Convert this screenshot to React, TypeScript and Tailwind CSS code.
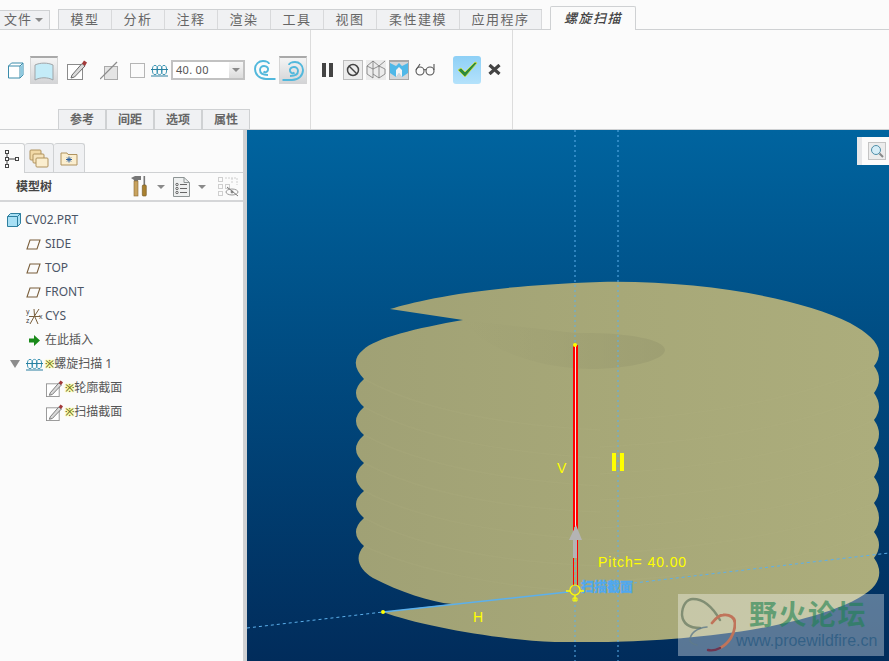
const mainTabs = [
  { label: '模型', w: 'w-[53px]' },
  { label: '分析', w: 'w-[53px]' },
  { label: '注释', w: 'w-[53px]' },
  { label: '渲染', w: 'w-[53px]' },
  { label: '工具', w: 'w-[53px]' },
  { label: '视图', w: 'w-[53px]' },
  { label: '柔性建模', w: 'w-[83px]' },
  { label: '应用程序', w: 'w-[82px]' },
];

const subTabs = ['参考', '间距', '选项', '属性'];

const datums = ['SIDE', 'TOP', 'FRONT'];

// thread shading streaks on the model, page coordinates
const streaks = [
  'M620 420 C700 415 800 400 874 366',
  'M600 447 C700 442 800 428 874 393',
  'M600 474 C700 468 800 455 874 420',
  'M600 500 C700 495 800 482 874 448',
  'M600 528 C700 522 800 510 874 477',
  'M600 554 C700 548 800 535 874 503',
  'M600 582 C700 576 800 562 874 532',
  'M364 379 C420 410 500 425 600 430',
  'M364 407 C420 438 500 452 600 458',
  'M364 435 C420 465 500 480 600 486',
  'M364 463 C420 492 500 508 600 512',
  'M364 491 C420 520 500 534 600 540',
  'M364 518 C420 548 500 562 600 566',
  'M364 546 C420 572 500 585 560 590',
];

function CoilIcon() {
  return (
    <svg width="17" height="14" viewBox="0 0 17 14" fill="none">
      <ellipse cx="4" cy="7" rx="2.6" ry="4.6" stroke="#3f97b5" />
      <ellipse cx="8.5" cy="7" rx="2.6" ry="4.6" stroke="#3f97b5" />
      <ellipse cx="13" cy="7" rx="2.6" ry="4.6" stroke="#3f97b5" />
      <path d="M0 6.5H17M0 13H17" stroke="#2a7f9f" />
    </svg>
  );
}

function SketchIcon({ size = 20 }: { size?: number }) {
  return (
    <svg width={size} height={size} viewBox="0 0 20 20" fill="none">
      <rect x="0.5" y="4.5" width="15" height="15" fill="#fff" stroke="#8b8b8b" />
      <path d="M5 15 L15 3.5 L18 6 L7.5 17 L4 18 Z" fill="#d9d9d9" stroke="#5b5b5b" strokeWidth="0.9" />
      <path d="M15 3.5 L17 0.5 L20 2.5 L18 6 Z" fill="#a33a3a" />
    </svg>
  );
}

function PlaneIcon() {
  return (
    <svg width="15" height="11" viewBox="0 0 15 11" fill="none">
      <path d="M4 1 H14 L11 10 H1 Z" fill="#fbfbfb" stroke="#7a5f3c" strokeWidth="1.1" />
    </svg>
  );
}

function Arrow() {
  return <div className="h-0 w-0 border-x-[4px] border-t-[4px] border-x-transparent border-t-[#8a8a8a]" />;
}

function Star() {
  return <span className="-translate-y-[3px] text-[11px] leading-none text-[#555] [text-shadow:0_0_1px_#ffff00,0_0_2px_#ffff00]">※</span>;
}

function FolderIcon({ many }: { many?: boolean }) {
  if (many) {
    return (
      <svg width="20" height="20" viewBox="0 0 20 20">
        <rect x="1" y="2" width="11" height="10" rx="1" fill="#f2d9a6" stroke="#b0935f" />
        <rect x="4" y="6" width="11" height="9" rx="1" fill="#f6e3bb" stroke="#b0935f" />
        <rect x="7" y="10" width="12" height="9" rx="1" fill="#fbeecf" stroke="#b0935f" />
      </svg>
    );
  }
  return (
    <svg width="18" height="16" viewBox="0 0 18 16">
      <path d="M1 3 H7 L8 4.5 H17 V15 H1 Z" fill="#fbeecf" stroke="#b0935f" />
      <path d="M9 6.5 V12.5 M6 9.5 H12 M7 7.5 L11 11.5 M11 7.5 L7 11.5" stroke="#2b5f9e" />
    </svg>
  );
}

function TreeGlyph() {
  return (
    <svg width="17" height="20" viewBox="0 0 17 20" fill="none" stroke="#444">
      <rect x="1.5" y="1.5" width="3" height="3" />
      <rect x="1.5" y="8.5" width="3" height="3" />
      <rect x="1.5" y="15.5" width="3" height="3" />
      <rect x="11.5" y="8.5" width="3" height="3" />
      <path d="M3 4.5V8.5M3 11.5V15.5M4.5 10H11.5" />
    </svg>
  );
}

function ToolsIcon() {
  return (
    <svg width="18" height="21" viewBox="0 0 18 21">
      <path d="M0 2 L4 0 H10 V4 H7 V20 H3 V4 Z" fill="#777" />
      <rect x="3" y="5" width="4" height="15" fill="#c8a35f" stroke="#8a6a32" strokeWidth="0.6" />
      <rect x="12.5" y="0" width="1.6" height="10" fill="#777" />
      <rect x="11.3" y="9" width="4" height="11" rx="1" fill="#a9802f" stroke="#6e5220" strokeWidth="0.6" />
    </svg>
  );
}

function ListIcon() {
  return (
    <svg width="17" height="20" viewBox="0 0 17 20" fill="none">
      <path d="M0.5 0.5 H11 L16.5 5.5 V19.5 H0.5 Z" fill="#eef0f0" stroke="#8d9494" />
      <path d="M11 0.5 V5.5 H16.5" stroke="#8d9494" />
      <path d="M7 7.5H14M7 11.5H14M7 15.5H14" stroke="#666" />
      <circle cx="4" cy="7.5" r="1.2" stroke="#666" />
      <circle cx="4" cy="11.5" r="1.2" stroke="#666" />
      <circle cx="4" cy="15.5" r="1.2" stroke="#666" />
    </svg>
  );
}

function FilterIcon() {
  return (
    <svg width="21" height="20" viewBox="0 0 21 20" fill="none" stroke="#cfcfcf">
      <rect x="0.5" y="0.5" width="4" height="4" />
      <rect x="0.5" y="7.5" width="4" height="4" />
      <rect x="0.5" y="14.5" width="4" height="4" />
      <rect x="7.5" y="7.5" width="4" height="4" />
      <path d="M7 1H19V8M14 1V6" strokeDasharray="2 1" />
      <ellipse cx="14" cy="15" rx="6" ry="3" stroke="#999" />
      <circle cx="14" cy="15" r="1.4" fill="#888" stroke="none" />
      <path d="M9 10 L20 19" stroke="#777" />
    </svg>
  );
}

function SpiralIcon({ flip }: { flip?: boolean }) {
  return (
    <svg width="22" height="20" viewBox="0 0 22 20" fill="none" stroke="#52b8dc" strokeWidth="1.9" className={flip ? '-scale-x-100' : ''}>
      <path d="M21.5 19 H12 C5 19 1 14 1 9 C1 4 5 1 9 1 C12 1 15 2 15 4" />
      <path d="M14 15 C9 15 6 13 6 10 C6 7 8 6 10 6 C13 6 14.5 8 14 10 C13.5 12 11 13 9.5 11.5" />
    </svg>
  );
}

function IconButton({ children, active }: { children: React.ReactNode; active?: boolean }) {
  return (
    <div className={`flex h-[28px] w-[28px] items-center justify-center ${active ? 'border-x border-x-[#d5d5d5] border-t-2 border-t-[#a9a9a9] bg-gradient-to-b from-[#f4f4f4] to-[#d2d3d5]' : ''}`}>
      {children}
    </div>
  );
}

function Ribbon() {
  return (
    <div className="flex h-[100px] border-b border-[#cfd1d3] bg-[#fbfbfb]">
      {/* first group */}
      <div className="flex w-[311px] flex-col border-r border-[#dcdcdc]">
        <div className="flex flex-1 items-center pt-[1px]">
          <div className="ml-[8px]">
            <svg width="16" height="17" viewBox="0 0 16 17" fill="none">
              <path d="M0.5 4 L3.5 1 H15 V13 L12 16 H0.5 Z" fill="#fff" stroke="#3b8cab" />
              <path d="M12 16 V4 H0.5 M12 4 L15 1" stroke="#3b8cab" />
              <path d="M12.5 4.5 L15 2 V12.5 L12.5 15 Z" fill="#8fc9df" />
            </svg>
          </div>
          <div className="ml-[6px]">
            <IconButton active>
              <svg width="20" height="19" viewBox="0 0 20 19" fill="none">
                <path d="M1 18 V3 C6 0.5 14 0.5 19 3 V18 C14 15 6 15 1 18 Z" fill="#c4ecf8" stroke="#a0a5a8" />
              </svg>
            </IconButton>
          </div>
          <div className="ml-[9px]"><SketchIcon /></div>
          <div className="ml-[13px]">
            <svg width="18" height="19" viewBox="0 0 18 19" fill="none">
              <rect x="4.5" y="5.5" width="13" height="13" fill="#e4e4e4" stroke="#aaa" />
              <path d="M0 18 L17 1" stroke="#8c8c8c" strokeWidth="1.2" />
            </svg>
          </div>
          <div className="ml-[12px] h-[15px] w-[15px] border border-[#b5b5b5] bg-[#fbfbfb]" />
          <div className="ml-[6px]"><CoilIcon /></div>
          <div className="ml-[3px] flex h-[20px] w-[74px] border-2 border-[#c2c2c2] bg-white">
            <span className="flex-1 pl-[3px] text-[11px] leading-[16px] tracking-[0.3px] text-[#555]">40. 00</span>
            <div className="flex w-[14px] items-center justify-center bg-gradient-to-b from-[#f7f7f7] to-[#dcdcdc]"><Arrow /></div>
          </div>
          <div className="ml-[9px]"><SpiralIcon /></div>
          <div className="ml-[3px]">
            <IconButton active><SpiralIcon flip /></IconButton>
          </div>
        </div>
        <div className="ml-[58px] flex h-[20px]">
          {subTabs.map((t) => (
            <div key={t} className="flex w-[48px] items-center justify-center border-x border-t border-[#cfd1d3] bg-[#f0f1f3] text-[12px] font-bold text-[#666]">
              {t}
            </div>
          ))}
        </div>
      </div>

      {/* second group */}
      <div className="flex w-[202px] items-center border-r border-[#dcdcdc] pb-[21px] pt-[1px]">
        <div className="ml-[11px] flex gap-[3px]">
          <div className="h-[14px] w-[4px] bg-[#444]" />
          <div className="h-[14px] w-[4px] bg-[#444]" />
        </div>
        <div className="ml-[10px] flex h-[20px] w-[20px] items-center justify-center border border-[#bdbdbd] bg-[#ececec]">
          <svg width="14" height="14" viewBox="0 0 14 14" fill="none" stroke="#444" strokeWidth="1.5">
            <circle cx="7" cy="7" r="5.5" />
            <path d="M3 3 L11 11" />
          </svg>
        </div>
        <div className="ml-[3px] flex h-[20px] w-[20px] items-center justify-center bg-[#ececec]">
          <svg width="20" height="20" viewBox="0 0 20 20" fill="none" stroke="#777" strokeWidth="0.8">
            <path d="M1 6 L7 9 V18 L1 14 Z M7 9 L13 6 L19 9 V14 L13 18 L7 14 M13 6 V18 M7 1 L13 6 L19 1 M1 6 L7 1 V9" />
          </svg>
        </div>
        <div className="ml-[3px] flex h-[20px] w-[20px] items-center justify-center border border-t-2 border-[#a9a9a9] bg-[#d5d6d8]">
          <svg width="18" height="16" viewBox="0 0 18 16">
            <path d="M0 1 L6 4 L9 1 V11 L6 15 L0 11 Z M9 1 L12 4 L18 1 V11 L12 15 L9 11 Z" fill="#4fb8e8" />
            <path d="M6 8 L9 5 L12 8 V15 L9 11 L6 15 Z" fill="#f4f4f4" />
          </svg>
        </div>
        <div className="ml-[6px]">
          <svg width="20" height="13" viewBox="0 0 20 13" fill="none" stroke="#555" strokeWidth="1.1">
            <circle cx="5" cy="8" r="4" />
            <circle cx="15" cy="8" r="4" />
            <path d="M9 7 C10 6 10 6 11 7 M1 7 L5 1 M19 7 V1" />
          </svg>
        </div>
        <div className="ml-[18px] flex h-[28px] w-[28px] items-center justify-center rounded-[3px] bg-gradient-to-b from-[#8ed0f6] to-[#b4e2fb]">
          <svg width="21" height="17" viewBox="0 0 21 17">
            <path d="M1 9 L4 7 L8 11 L18 1 L20 2 L8 16 Z" fill="#2d8a3e" stroke="#d8e23a" strokeWidth="0.8" />
          </svg>
        </div>
        <div className="ml-[7px]">
          <svg width="13" height="11" viewBox="0 0 13 11">
            <path d="M1.5 1 L11.5 10 M11.5 1 L1.5 10" stroke="#444" strokeWidth="3.2" />
          </svg>
        </div>
      </div>
      <div className="flex-1" />
    </div>
  );
}

function ModelTree() {
  return (
    <div className="flex w-[243px] shrink-0 flex-col bg-[#fbfbfb]">
      <div className="mt-[13px] flex h-[30px] border-b border-[#cfd1d3]">
        <div className="relative z-10 -mb-px flex h-[30px] w-[25px] items-center justify-center rounded-tr-[3px] border-r border-t border-[#cfd1d3] bg-[#fbfbfb]">
          <TreeGlyph />
        </div>
        <div className="flex w-[29px] items-center justify-center rounded-t-[3px] border-r border-t border-[#cfd1d3] bg-[#f0f1f3]">
          <FolderIcon many />
        </div>
        <div className="flex w-[31px] items-center justify-center rounded-t-[3px] border-r border-t border-[#cfd1d3] bg-[#f0f1f3]">
          <FolderIcon />
        </div>
      </div>
      <div className="flex h-[29px] items-center border-b-2 border-[#d5d6d8] pl-[16px]">
        <span className="w-[115px] text-[12px] font-bold text-[#444]">模型树</span>
        <ToolsIcon />
        <div className="ml-[8px]"><Arrow /></div>
        <div className="ml-[8px]"><ListIcon /></div>
        <div className="ml-[8px]"><Arrow /></div>
        <div className="ml-[12px]"><FilterIcon /></div>
      </div>
      <div className="mt-[6px] flex flex-col text-[12px] text-[#4b5566]">
        <div className="flex h-[24px] items-center pl-[7px]">
          <svg width="14" height="14" viewBox="0 0 14 14">
            <path d="M0.5 3.5 L3.5 0.5 H13.5 V10.5 L10.5 13.5 H0.5 Z" fill="#a8e0f5" stroke="#2f7f9f" />
            <path d="M0.5 3.5 H10.5 V13.5 M10.5 3.5 L13.5 0.5" stroke="#2f7f9f" fill="none" />
          </svg>
          <span className="ml-[4px]">CV02.PRT</span>
        </div>
        {datums.map((d) => (
          <div key={d} className="flex h-[24px] items-center pl-[26px]">
            <PlaneIcon />
            <span className="ml-[4px]">{d}</span>
          </div>
        ))}
        <div className="flex h-[24px] items-center pl-[25px]">
          <svg width="18" height="17" viewBox="0 0 18 17" fill="none">
            <path d="M9 1 L9.5 8 L5 16 M14 1 L9.5 8 L13 16 M4 8.5 H15" stroke="#7a5f3c" />
            <text x="1" y="6" fontSize="7" fill="#444" fontFamily="'Liberation Sans', sans-serif">y</text>
            <text x="1" y="15" fontSize="7" fill="#444" fontFamily="'Liberation Sans', sans-serif">z</text>
            <text x="14" y="11" fontSize="7" fill="#444" fontFamily="'Liberation Sans', sans-serif">x</text>
          </svg>
          <span className="ml-[2px]">CYS</span>
        </div>
        <div className="flex h-[24px] items-center pl-[29px]">
          <svg width="11" height="11" viewBox="0 0 11 11">
            <path d="M0 3.5 H5 V0 L11 5.5 L5 11 V7.5 H0 Z" fill="#1a8a1a" />
          </svg>
          <span className="ml-[5px] text-[#555]">在此插入</span>
        </div>
        <div className="flex h-[24px] items-center pl-[10px]">
          <div className="h-0 w-0 border-x-[5px] border-t-[8px] border-x-transparent border-t-[#8c8c8c]" />
          <div className="ml-[6px]"><CoilIcon /></div>
          <div className="ml-[2px]"><Star /></div>
          <span className="text-[#555]">螺旋扫描 1</span>
        </div>
        <div className="flex h-[24px] items-center pl-[46px]">
          <SketchIcon size={17} />
          <div className="ml-[2px]"><Star /></div>
          <span className="text-[#555]">轮廓截面</span>
        </div>
        <div className="flex h-[24px] items-center pl-[46px]">
          <SketchIcon size={17} />
          <div className="ml-[2px]"><Star /></div>
          <span className="text-[#555]">扫描截面</span>
        </div>
      </div>
    </div>
  );
}

function ModelDrawing() {
  return (
    <svg className="absolute inset-0 h-full w-full" viewBox="247 130 642 531" fill="none">
      <defs>
        <linearGradient id="body" x1="0" x2="1" y1="0" y2="0">
          <stop offset="0" stopColor="#a0a175" />
          <stop offset="0.5" stopColor="#a7a878" />
          <stop offset="1" stopColor="#acad7c" />
        </linearGradient>
        <linearGradient id="hole" x1="0" x2="1" y1="0" y2="0">
          <stop offset="0" stopColor="#9a9b70" stopOpacity="0" />
          <stop offset="0.6" stopColor="#9a9b70" stopOpacity="0.45" />
          <stop offset="1" stopColor="#9a9b70" stopOpacity="0.7" />
        </linearGradient>
      </defs>
      <path
        fill="url(#body)"
        d="M390 309 C420 300 480 286 600 282 C700 280 800 298 850 323 C868 333 878 342 879 352 Q879 360 874 366 Q884 379 874 393 Q884 407 874 420 Q884 434 874 448 Q884 462 874 477 Q884 490 874 503 Q884 518 874 532 Q884 545 874 558 Q884 572 875 585 C860 605 800 622 750 630 C700 638 640 642 600 642 L555 642 C500 640 420 626 383 612 L452 604 C430 602 400 592 373 578 C360 570 353 558 364 546 Q348 532 364 518 Q348 504 364 491 Q348 477 364 463 Q348 449 364 435 Q348 421 364 407 Q348 393 364 379 Q348 362 363 350 C375 338 417 328 463 320 Z"
      />
      <path fill="url(#hole)" d="M463 320 L575 333 C620 332 665 338 665 350 C665 360 630 369 590 369 C530 368 480 345 463 320 Z" />
      {streaks.map((d) => (
        <path key={d} d={d} stroke="#b3b484" strokeOpacity="0.15" strokeWidth="1.5" />
      ))}

      {/* axes */}
      <path d="M575 130 V661 M618 130 V661" stroke="#5cb0ec" strokeDasharray="2 3" />
      <path d="M247 628 L383 612" stroke="#5cb0ec" strokeDasharray="3 3" />
      <path d="M383 612 L568 592" stroke="#5cb0ec" strokeWidth="1.4" />
      <path d="M634 583 L889 553" stroke="#5cb0ec" strokeDasharray="3 3" />

      {/* helix direction */}
      <rect x="573" y="345" width="5" height="182" fill="#ff0000" />
      <rect x="575" y="345" width="1" height="182" fill="#f4e8e0" />
      <path d="M573.5 527 V586 M577.5 527 V586" stroke="#ff0000" />
      <path d="M576 525 L582 540 H569 Z" fill="#b4b4b4" />
      <rect x="573" y="540" width="4" height="18" fill="#b4b4b4" />
      <circle cx="575" cy="345" r="2" fill="#ffff00" />
      <circle cx="383" cy="612" r="2" fill="#ffff00" />

      <text x="581" y="591" fontSize="13" fill="#4fa8f0" stroke="#4fa8f0" strokeWidth="0.4" fontFamily="'Noto Sans CJK SC', sans-serif" fontWeight="700">扫描截面</text>
      <circle cx="575" cy="590" r="5" stroke="#ffff00" strokeWidth="1.2" />
      <path d="M566 591 H570 M580 591 H584 M575 595 V601" stroke="#ffff00" strokeWidth="1.4" />
      <path d="M573 598 H577 V601 H573 Z" stroke="#ffff00" />

      <text x="557" y="473" fontSize="14" fill="#ffff00" fontFamily="'Liberation Sans', sans-serif">V</text>
      <text x="473" y="622" fontSize="14" fill="#ffff00" fontFamily="'Liberation Sans', sans-serif">H</text>
      <text x="598" y="567" fontSize="14" letterSpacing="0.9" fill="#ffff00" fontFamily="'Liberation Sans', sans-serif">Pitch= 40.00</text>
      <rect x="612" y="453" width="4" height="18" fill="#ffff00" />
      <rect x="620" y="453" width="4" height="18" fill="#ffff00" />
    </svg>
  );
}

function Watermark() {
  return (
    <div className="absolute left-[431px] top-[464px] flex h-[62px] w-[206px] bg-white/35">
      <svg width="58" height="62" viewBox="0 0 58 62" fill="none" className="shrink-0">
        <path d="M22 34 C12 34 5 30 4 21 C4 11 9 5 15 5 C24 5 34 12 42 26" stroke="#6f7f66" strokeOpacity="0.8" strokeWidth="2.4" strokeLinecap="round" />
        <path d="M34 29 C38 24 41 21 45 21 C52 20 57 24 57 29 C57 41 50 50 42 54" stroke="#c0745a" strokeWidth="2.8" strokeLinecap="round" />
        <path d="M42 54 C38 56 34 57 30 56" stroke="#6e3550" strokeWidth="2.4" strokeLinecap="round" />
        <path d="M19 51 C14 50 12 48 12 46 C12 40 18 34 29 33" stroke="#5f7a8a" strokeOpacity="0.8" strokeWidth="1.6" strokeLinecap="round" />
      </svg>
      <div className="flex flex-col">
        <span className="ml-[13px] mt-[2px] text-[28px] font-bold leading-[36px] tracking-[1.5px] text-[#1e8250]/60">野火论坛</span>
        <span className="text-[16px] leading-[18px] text-[#22567f]/70 font-['Liberation_Sans',sans-serif]">www.proewildfire.cn</span>
      </div>
    </div>
  );
}

export default function App() {
  return (
    <div className="flex h-[661px] w-[889px] flex-col overflow-hidden bg-[#fbfbfb] font-['Noto_Sans','Noto_Sans_CJK_SC',sans-serif]">
      {/* ribbon tabs */}
      <div className="flex h-[30px] items-end border-b border-[#cfd1d3] bg-[#fbfbfb]">
        <div className="flex h-[19px] w-[50px] items-center gap-[3px] border-r border-t border-[#cfd1d3] bg-[#f0f1f3] pl-[4px] text-[13px] tracking-[1px] text-[#666]">
          文件 <Arrow />
        </div>
        <div className="ml-[8px] flex border-l border-t border-[#cfd1d3]">
          {mainTabs.map((t) => (
            <div key={t.label} className={`flex h-[19px] items-center justify-center border-r border-[#d8d9db] bg-[#f0f1f3] text-[13px] tracking-[1.5px] text-[#666] ${t.w}`}>
              {t.label}
            </div>
          ))}
        </div>
        <div className="relative z-10 -mb-px ml-[8px] flex h-[24px] w-[86px] items-center justify-center rounded-t-[2px] border-x border-t border-[#cfd1d3] bg-[#fbfbfb] text-[13px] font-medium italic tracking-[1.5px] text-[#444]">
          螺旋扫描
        </div>
      </div>

      <Ribbon />

      <div className="flex flex-1">
        <ModelTree />
        <div className="w-[4px] shrink-0 bg-[#d0d1d3]" />
        <div className="relative flex-1 bg-gradient-to-b from-[#00649f] to-[#012c5b]">
          <ModelDrawing />
          <div className="absolute right-0 top-[7px] flex h-[28px] w-[32px] items-center bg-[#fbfbfb]">
            <div className="h-full w-[5px] bg-[#e6e7e9]" />
            <div className="ml-[6px] flex h-[18px] w-[18px] items-center justify-center border border-[#c4c4c4] bg-[#ececec]">
              <svg width="14" height="14" viewBox="0 0 14 14" fill="none">
                <circle cx="6" cy="6" r="4.5" fill="#d5edf7" stroke="#4f8fa8" />
                <path d="M9.5 9.5 L13 13" stroke="#888" strokeWidth="2" />
              </svg>
            </div>
          </div>
          <Watermark />
        </div>
      </div>
    </div>
  );
}
